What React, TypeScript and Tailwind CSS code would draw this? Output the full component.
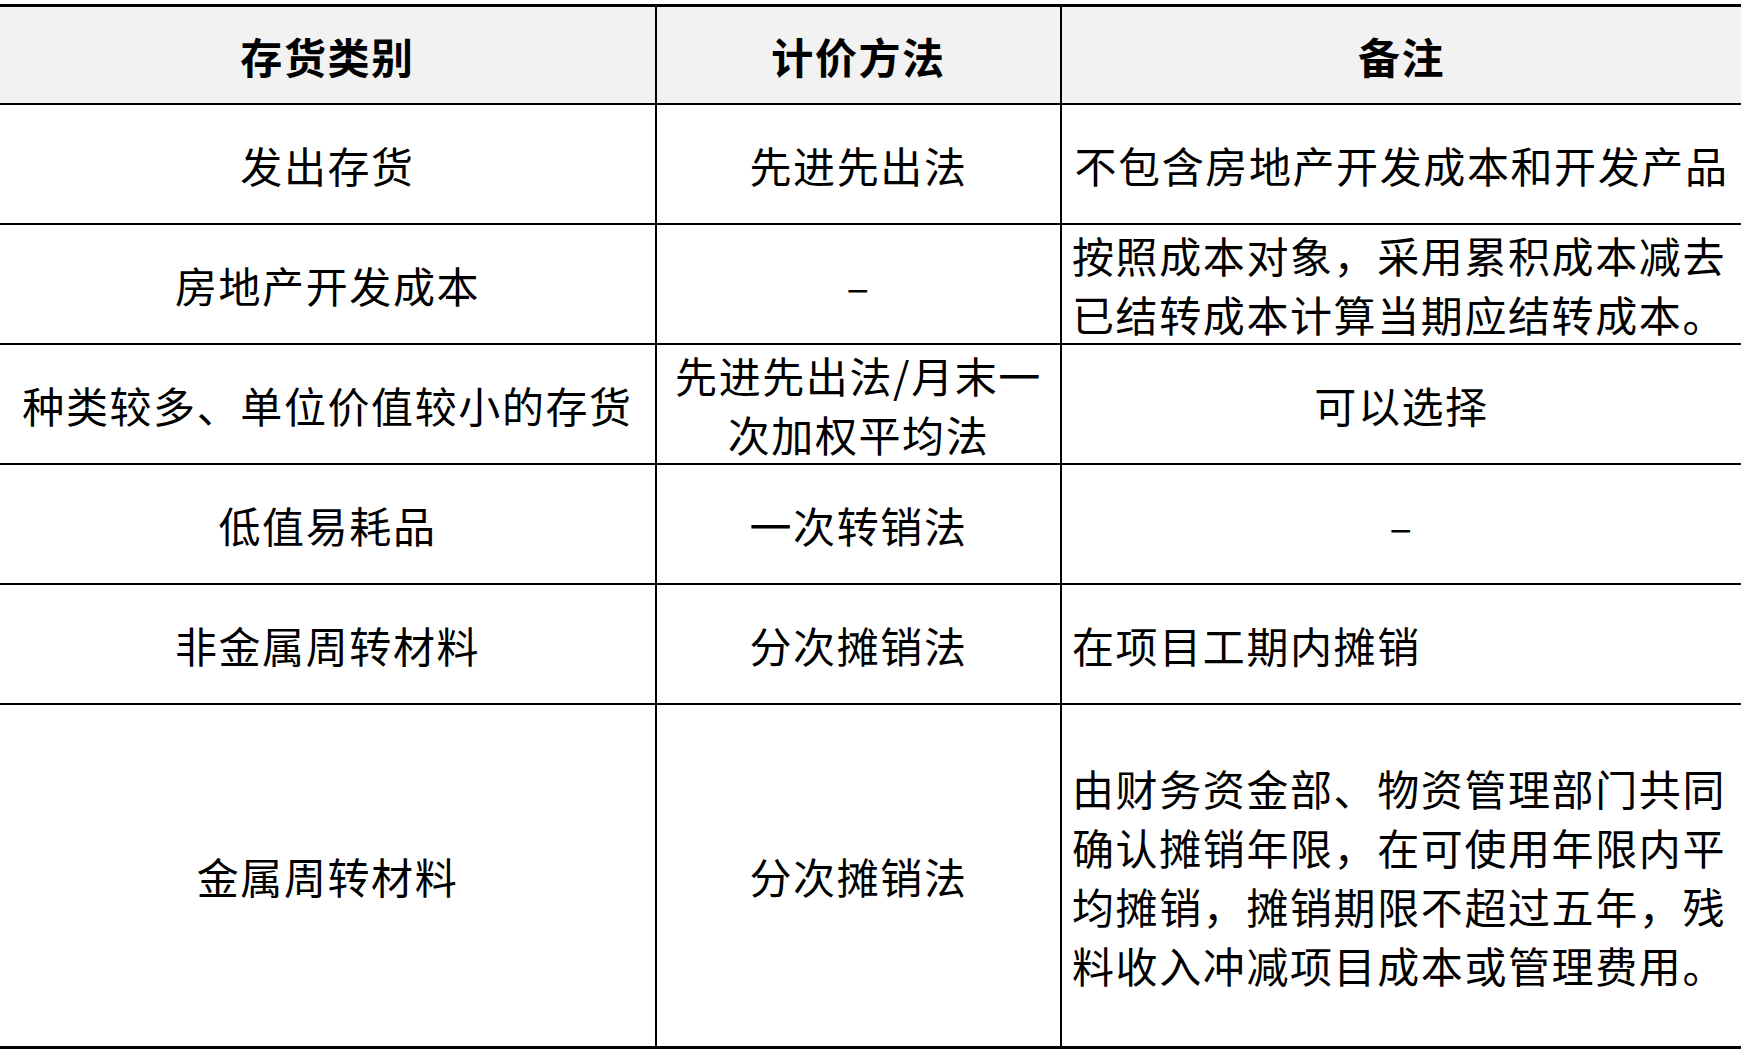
type Row = {
  category: string;
  method: string;
  note: string;
  noteAlign: "left" | "center";
  tall?: boolean;
};

const ROWS: Row[] = [
  {
    category: "发出存货",
    method: "先进先出法",
    note: "不包含房地产开发成本和开发产品",
    noteAlign: "center",
  },
  {
    category: "房地产开发成本",
    method: "–",
    note: "按照成本对象，采用累积成本减去已结转成本计算当期应结转成本。",
    noteAlign: "left",
  },
  {
    category: "种类较多、单位价值较小的存货",
    method: "先进先出法/月末一次加权平均法",
    note: "可以选择",
    noteAlign: "center",
  },
  {
    category: "低值易耗品",
    method: "一次转销法",
    note: "–",
    noteAlign: "center",
  },
  {
    category: "非金属周转材料",
    method: "分次摊销法",
    note: "在项目工期内摊销",
    noteAlign: "left",
  },
  {
    category: "金属周转材料",
    method: "分次摊销法",
    note: "由财务资金部、物资管理部门共同确认摊销年限，在可使用年限内平均摊销，摊销期限不超过五年，残料收入冲减项目成本或管理费用。",
    noteAlign: "left",
    tall: true,
  },
];

export default function App() {
  return (
    <div className="w-[1741px] h-[1055px] bg-white pt-[4px] font-['Noto_Sans_CJK_SC',sans-serif] text-black">
      <div className="border-t-[3px] border-b-[3px] border-black">
        <div className="grid grid-cols-[655px_405px_681px] h-[98px] bg-[#f2f2f2] border-b-2 border-black text-[42px] leading-[59px] tracking-[1.6px] font-bold">
          <div className="flex items-center justify-center">存货类别</div>
          <div className="flex items-center justify-center border-l-2 border-black">计价方法</div>
          <div className="flex items-center justify-center border-l-2 border-black">备注</div>
        </div>
        {ROWS.map((row, i) => (
          <div
            key={i}
            className={
              row.tall
                ? "grid grid-cols-[655px_405px_681px] h-[341px] text-[42px] leading-[59px] tracking-[1.6px]"
                : "grid grid-cols-[655px_405px_681px] h-[120px] border-b-2 border-black text-[42px] leading-[59px] tracking-[1.6px]"
            }
          >
            <div className="flex items-center justify-center px-[10px] text-center">{row.category}</div>
            <div className="flex items-center justify-center px-[10px] text-center border-l-2 border-black">
              {row.method}
            </div>
            <div
              className={
                row.noteAlign === "center"
                  ? "flex items-center justify-center px-[10px] text-center border-l-2 border-black"
                  : "flex items-center px-[10px] text-left border-l-2 border-black"
              }
            >
              <p>{row.note}</p>
            </div>
          </div>
        ))}
      </div>
    </div>
  );
}
